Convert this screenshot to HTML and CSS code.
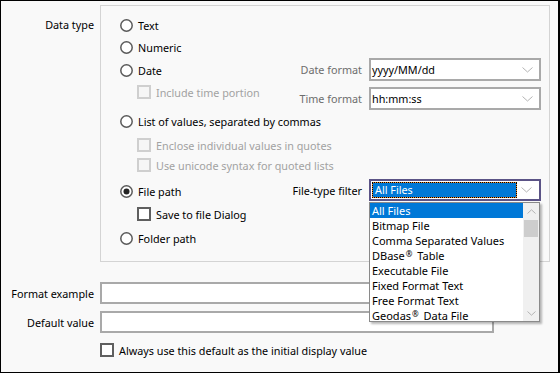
FILE: index.html
```html
<!DOCTYPE html>
<html>
<head>
<meta charset="utf-8">
<link rel="stylesheet" href="styles.css">
</head>
<body>
<div class="window">
  <div class="top">
    <div class="side-label">Data type</div>
    <div class="group">
      <div class="row"><svg class="radio" width="13" height="13" viewBox="0 0 13 13"><circle cx="6.5" cy="6.5" r="5.7"/></svg>Text</div>
      <div class="row"><svg class="radio" width="13" height="13" viewBox="0 0 13 13"><circle cx="6.5" cy="6.5" r="5.7"/></svg>Numeric</div>
      <div class="section date-section">
        <div class="left">
          <div class="row"><svg class="radio" width="13" height="13" viewBox="0 0 13 13"><circle cx="6.5" cy="6.5" r="5.7"/></svg>Date</div>
          <div class="row sub disabled"><span class="check off"></span>Include time portion</div>
        </div>
        <div class="right">
          <div class="flabel gray">Date format</div>
          <div class="combo"><span class="val">yyyy/MM/dd</span><svg class="chev" width="11" height="6" viewBox="0 0 11 6"><polyline points="0.5,0.5 5.5,5 10.5,0.5"/></svg></div>
          <div class="flabel gray">Time format</div>
          <div class="combo"><span class="val">hh:mm:ss</span><svg class="chev" width="11" height="6" viewBox="0 0 11 6"><polyline points="0.5,0.5 5.5,5 10.5,0.5"/></svg></div>
        </div>
      </div>
      <div class="row"><svg class="radio" width="13" height="13" viewBox="0 0 13 13"><circle cx="6.5" cy="6.5" r="5.7"/></svg>List of values, separated by commas</div>
      <div class="row sub disabled short first"><span class="check off"></span>Enclose individual values in quotes</div>
      <div class="row sub disabled short"><span class="check off"></span>Use unicode syntax for quoted lists</div>
      <div class="section file-section">
        <div class="left">
          <div class="row"><svg class="radio" width="13" height="13" viewBox="0 0 13 13"><circle cx="6.5" cy="6.5" r="5.7"/><circle class="dot" cx="6.5" cy="6.5" r="3"/></svg>File path</div>
          <div class="row sub save"><span class="check"></span>Save to file Dialog</div>
        </div>
        <div class="right">
          <div class="flabel">File-type filter</div>
          <div class="combo focus">
            <span class="sel">All Files</span><svg class="chev" width="11" height="6" viewBox="0 0 11 6"><polyline points="0.5,0.5 5.5,5 10.5,0.5"/></svg>
            <div class="droplist">
              <div class="items">
                <div class="item on">All Files</div>
                <div class="item">Bitmap File</div>
                <div class="item">Comma Separated Values</div>
                <div class="item">DBase<span class="reg">®</span> Table</div>
                <div class="item">Executable File</div>
                <div class="item">Fixed Format Text</div>
                <div class="item">Free Format Text</div>
                <div class="item">Geodas<span class="reg">®</span> Data File</div>
              </div>
              <div class="scrollbar">
                <div class="sbtn"><svg width="9" height="5" viewBox="0 0 9 5"><polyline points="0.5,4.5 4.5,0.8 8.5,4.5"/></svg></div>
                <div class="track"><div class="thumb"></div></div>
                <div class="sbtn"><svg width="9" height="5" viewBox="0 0 9 5"><polyline points="0.5,0.5 4.5,4.2 8.5,0.5"/></svg></div>
              </div>
            </div>
          </div>
        </div>
      </div>
      <div class="row folder"><svg class="radio" width="13" height="13" viewBox="0 0 13 13"><circle cx="6.5" cy="6.5" r="5.7"/></svg>Folder path</div>
    </div>
  </div>
  <div class="fields">
    <div class="flabel2">Format example</div>
    <div class="input"></div>
    <div class="flabel2">Default value</div>
    <div class="input"></div>
    <div></div>
    <div class="row"><span class="check"></span>Always use this default as the initial display value</div>
  </div>
</div>
</body>
</html>
```
FILE: styles.css
```css
* { box-sizing: border-box; }
body {
  margin: 0;
  font-family: "Noto Sans", "Segoe UI", sans-serif;
  font-size: 10.8px;
  color: #000;
  background: #fff;
}
.window {
  width: 560px;
  height: 373px;
  border: 1px solid #000;
  border-right-width: 2px;
  background: #f9f9f9;
  overflow: hidden;
}
.top {
  display: flex;
  gap: 6px;
  margin-top: 4px;
}
.side-label {
  width: 93px;
  text-align: right;
  padding-top: 9px;
  line-height: 22px;
}
.group {
  width: 450px;
  height: 257px;
  border: 1px solid #d4d4d4;
  padding: 8px 0 0 19px;
  display: flex;
  flex-direction: column;
}
.row {
  height: 22px;
  display: flex;
  align-items: center;
  gap: 5px;
  white-space: nowrap;
}
.row.sub { padding-left: 17px; }
.row.short { height: 20px; }
.row.first { margin-top: 3px; }
.disabled { color: #a2a2a2; }
.radio { flex: none; }
.radio circle { fill: #fff; stroke: #5a5a5a; stroke-width: 1.5; }
.radio circle.dot { fill: #222; stroke: none; }
.check {
  flex: none;
  width: 14px;
  height: 14px;
  border: 2px solid #5f5f5f;
  background: #fff;
}
.check.off {
  border-color: #cfcfcf;
  background: #f6f6f6;
}
.section { display: flex; }
.section .left {
  width: 162px;
  display: flex;
  flex-direction: column;
}
.section .right {
  display: grid;
  grid-template-columns: 80px 172px;
  column-gap: 7px;
  row-gap: 6px;
  align-items: center;
  align-content: start;
}
.date-section .left { padding-top: 1px; }
.date-section .combo { height: 23px; }
.file-section { margin-top: 3px; }
.file-section .left { padding-top: 2px; }
.file-section .right { padding-top: 1px; }
.row.save { margin-top: 1px; }
.row.folder { margin-top: 2px; }
.flabel {
  text-align: right;
  white-space: nowrap;
}
.flabel.gray { color: #6d6d6d; }
.combo {
  position: relative;
  height: 22px;
  border: 2px solid #a9a9a9;
  background: #fff;
  display: flex;
  align-items: center;
  padding-left: 1px;
}
.combo .val { flex: 1; }
.chev {
  flex: none;
  margin: 0 6px 0 4px;
}
.chev polyline, .sbtn polyline {
  fill: none;
  stroke: #b4b4b4;
  stroke-width: 1;
}
.combo.focus {
  border-color: #5b5386;
  padding: 1px;
}
.sel {
  flex: 1;
  height: 16px;
  line-height: 14px;
  color: #fff;
  padding-left: 2px;
  border: 1px dotted #000;
  background: linear-gradient(#0078d7, #0078d7) padding-box, linear-gradient(#f0892a, #f0892a) border-box;
}
.droplist {
  position: absolute;
  top: 21px;
  left: -2px;
  width: 171px;
  height: 120px;
  border: 1px solid #8a8a8a;
  background: #fff;
  box-shadow: 2px 2px 2px rgba(0, 0, 0, 0.28);
  display: flex;
  overflow: hidden;
}
.items { flex: 1; }
.item {
  height: 15px;
  line-height: 15px;
  padding-left: 2px;
  white-space: nowrap;
  font-size: 11px;
}
.item.on { background: #0078d7; color: #fff; }
.reg {
  font-size: 8px;
  line-height: 0;
  vertical-align: 3px;
  margin: 0 2px 0 1px;
}
.scrollbar {
  width: 16px;
  background: #f0f0f0;
  display: flex;
  flex-direction: column;
}
.sbtn {
  height: 16px;
  display: flex;
  align-items: center;
  justify-content: center;
}
.track { flex: 1; padding: 1px 1px 0 1px; }
.thumb { height: 17px; background: #cdcdcd; }
.fields {
  margin-top: 20px;
  display: grid;
  grid-template-columns: 93px 394px;
  column-gap: 6px;
  grid-template-rows: 22px 22px 22px;
  row-gap: 7px;
  align-items: center;
}
.fields .row { height: 22px; margin-top: -2px; }
.flabel2 { text-align: right; white-space: nowrap; }
.input {
  height: 22px;
  border: 2px solid #a9a9a9;
  background: #fff;
}
```
